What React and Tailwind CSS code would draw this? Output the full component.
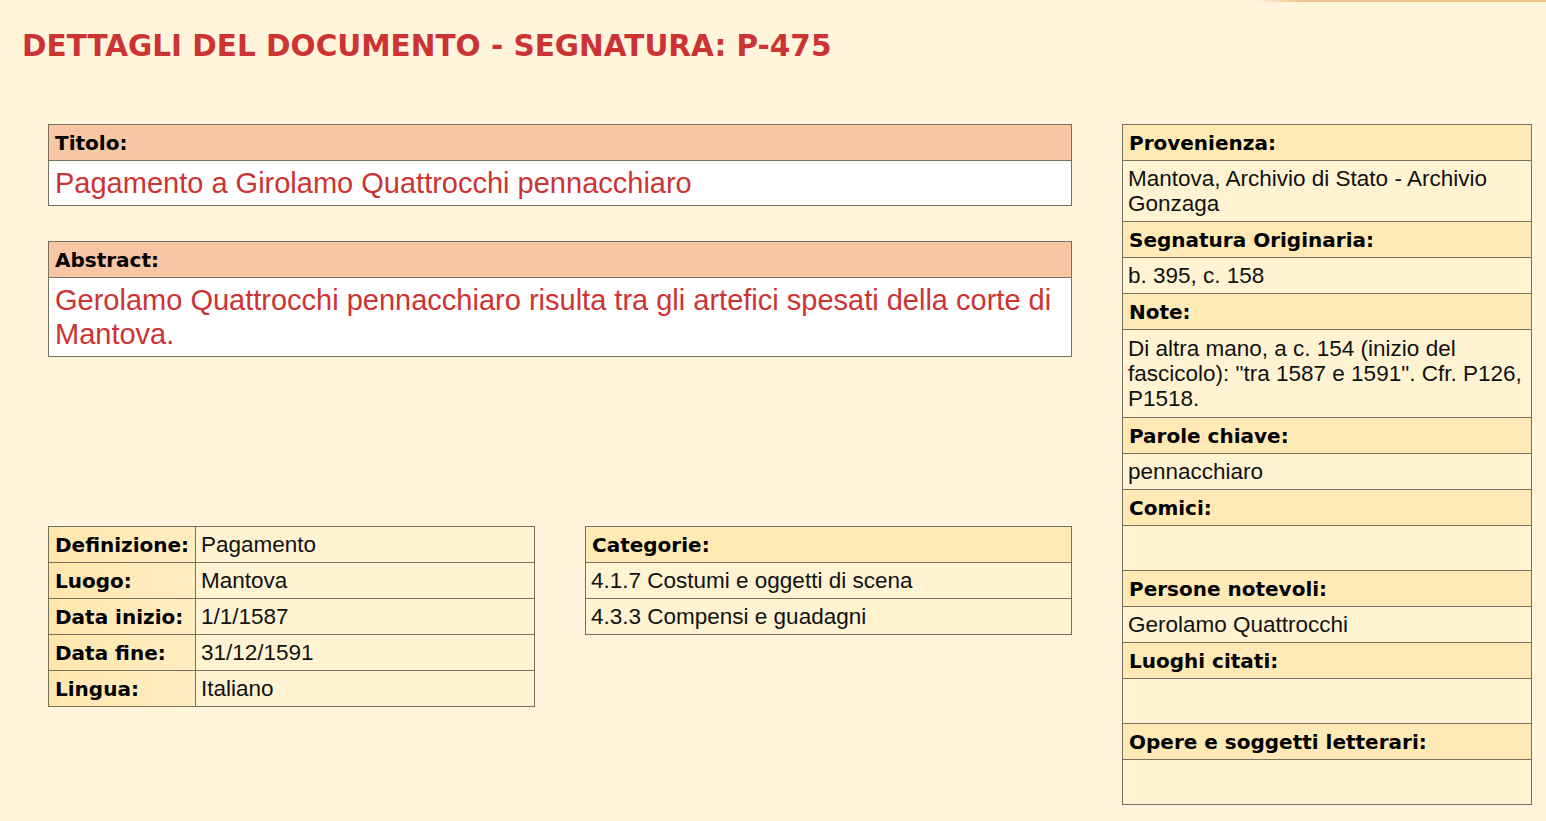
import React from 'react';

const LABEL_FONT = { fontFamily: '"DejaVu Sans", Verdana, sans-serif' };

const details = [
  ['Definizione:', 'Pagamento'],
  ['Luogo:', 'Mantova'],
  ['Data inizio:', '1/1/1587'],
  ['Data fine:', '31/12/1591'],
  ['Lingua:', 'Italiano'],
];

const categories = ['4.1.7 Costumi e oggetti di scena', '4.3.3 Compensi e guadagni'];

const side = [
  ['Provenienza:', 'Mantova, Archivio di Stato - Archivio Gonzaga'],
  ['Segnatura Originaria:', 'b. 395, c. 158'],
  ['Note:', 'Di altra mano, a c. 154 (inizio del fascicolo): "tra 1587 e 1591". Cfr. P126, P1518.'],
  ['Parole chiave:', 'pennacchiaro'],
  ['Comici:', ''],
  ['Persone notevoli:', 'Gerolamo Quattrocchi'],
  ['Luoghi citati:', ''],
  ['Opere e soggetti letterari:', ''],
];

const Label = ({ children, className = '' }) => (
  <div
    className={`h-[35px] flex items-center px-[6px] text-[20px] font-bold text-black ${className}`}
    style={LABEL_FONT}
  >
    {children}
  </div>
);

const MainBox = ({ label, text }) => (
  <div className="border border-[#77705f] bg-white">
    <Label className="bg-[#f7c6a4] border-b border-[#77705f] box-content">{label}</Label>
    <div className="px-[6px] py-[5px] text-[29px] leading-[34px] text-[#cc3333]">{text}</div>
  </div>
);

const App = () => {
  return (
    <div
      className="min-h-screen bg-[#fff5dc] text-[#111]"
      style={{ fontFamily: '"Liberation Sans", Arial, sans-serif' }}
    >
      {/* top accent line */}
      <div className="flex justify-end">
        <div className="h-[2px] w-[290px] bg-gradient-to-r from-[#fff5dc] via-[#f0c48e] via-15% to-[#efc38c]" />
      </div>

      <h1
        className="pl-[22px] pt-[26px] text-[29.5px] leading-[36px] font-bold text-[#cc3333]"
        style={LABEL_FONT}
      >
        DETTAGLI DEL DOCUMENTO - SEGNATURA: P-475
      </h1>

      <div className="flex gap-[50px] pl-[48px] pt-[60px] pb-[18px]">
        {/* left column */}
        <div className="w-[1024px] flex flex-col">
          <MainBox label="Titolo:" text="Pagamento a Girolamo Quattrocchi pennacchiaro" />
          <div className="mt-[35px]">
            <MainBox
              label="Abstract:"
              text="Gerolamo Quattrocchi pennacchiaro risulta tra gli artefici spesati della corte di Mantova."
            />
          </div>

          <div className="mt-[169px] flex gap-[50px] items-start">
            <div className="w-[487px] border border-[#77705f]">
              {details.map(([k, v], i) => (
                <div
                  key={k}
                  className={`flex ${i > 0 ? 'border-t border-[#77705f]' : ''}`}
                >
                  <Label className="w-[147px] bg-gradient-to-r from-[#ffe6ad] to-[#ffedc2] border-r border-[#77705f]">{k}</Label>
                  <div className="flex-1 h-[35px] flex items-center px-[5px] text-[22.5px] bg-[#fff3d2]">{v}</div>
                </div>
              ))}
            </div>

            <div className="w-[487px] border border-[#77705f]">
              <Label className="bg-[#ffe9b5] border-b border-[#77705f] box-content">Categorie:</Label>
              {categories.map((c, i) => (
                <div
                  key={c}
                  className={`h-[35px] box-content flex items-center px-[5px] text-[22.5px] bg-[#fff3d2] ${i > 0 ? 'border-t border-[#77705f]' : ''}`}
                >
                  {c}
                </div>
              ))}
            </div>
          </div>
        </div>

        {/* right column */}
        <div className="w-[410px] self-start border border-[#77705f]">
          {side.map(([k, v], i) => (
            <div key={k} className={i > 0 ? 'border-t border-[#77705f]' : ''}>
              <Label className="bg-[#ffe9b5] border-b border-[#77705f] box-content">{k}</Label>
              <div
                className={`px-[5px] text-[22.5px] leading-[25px] bg-[#fff3d2] ${
                  !v ? 'h-[44px]' : k === 'Note:' ? 'py-[6px]' : 'py-[5px]'
                }`}
              >
                {v}
              </div>
            </div>
          ))}
        </div>
      </div>
    </div>
  );
};

export default App;
